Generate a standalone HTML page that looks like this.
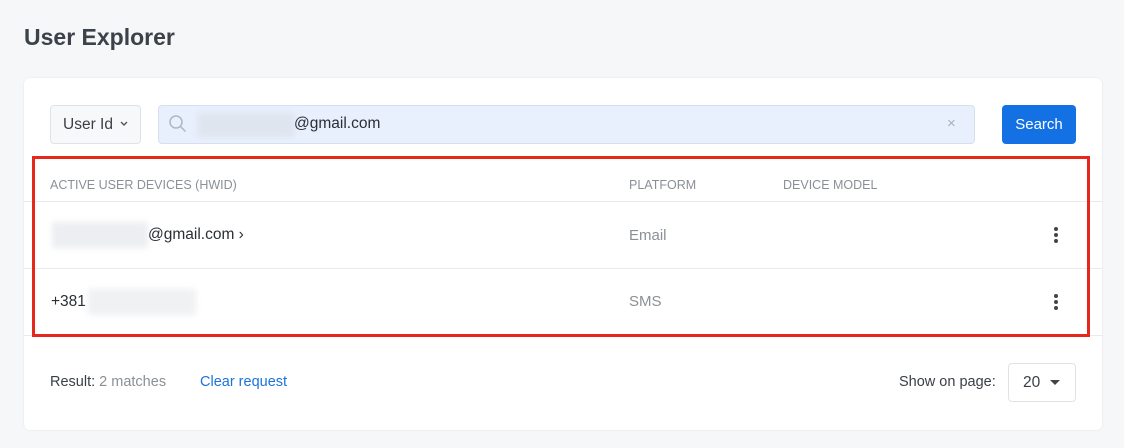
<!DOCTYPE html><html><head><style>
*{box-sizing:border-box;margin:0;padding:0}
body{width:1124px;height:448px;background:#f6f7f9;font-family:"Liberation Sans",sans-serif;position:relative;overflow:hidden;color:#333}
.a{position:absolute}
h1{position:absolute;left:24px;top:24px;font-size:23px;font-weight:bold;color:#3c4249}
.card{left:24px;top:78px;width:1078px;height:352px;background:#fff;border-radius:6px;box-shadow:0 0 2px rgba(0,0,0,.08)}
.blur{background:#eceef1;filter:blur(3px)}
.hd{font-size:12.5px;color:#8a9097;top:178px}
.line{left:24px;width:1078px;height:1px;background:#e8eaed}
.t{font-size:15.5px;color:#2a2f35}
.g{font-size:15px;color:#8b9096}
.dots{width:4px}
.dots i{display:block;width:4px;height:4px;border-radius:2px;background:#444;margin-bottom:2px}
</style></head><body>
<h1>User Explorer</h1>
<div class="a card"></div>
<div class="a" style="left:50px;top:105px;width:91px;height:39px;border:1px solid #dfe2e6;border-radius:4px;background:#f7f8fa"></div>
<div class="a t" style="left:63px;top:116px;color:#3a3f45">User Id</div>
<svg class="a" style="left:119px;top:120px" width="10" height="8"><path d="M2 2l3 3 3-3" stroke="#555" stroke-width="1.4" fill="none"/></svg>
<div class="a" style="left:158px;top:105px;width:817px;height:39px;border:1px solid #d6dff0;border-radius:4px;background:#e8effd"></div>
<svg class="a" style="left:168px;top:114px" width="20" height="20"><circle cx="8" cy="8" r="6" stroke="#aeb7c2" stroke-width="1.5" fill="none"/><path d="M12.5 12.5l5 5" stroke="#aeb7c2" stroke-width="1.5"/></svg>
<div class="a blur" style="left:198px;top:113px;width:96px;height:24px;background:#dfe5ef"></div>
<div class="a t" style="left:294px;top:115px">@gmail.com</div>
<div class="a" style="left:947px;top:115px;color:#a8b0ba;font-size:15px">×</div>
<div class="a" style="left:1002px;top:105px;width:74px;height:39px;background:#1371e3;border-radius:4px;color:#fff;font-size:15px;text-align:center;line-height:39px">Search</div>
<div class="a hd" style="left:50px">ACTIVE USER DEVICES (HWID)</div>
<div class="a hd" style="left:629px">PLATFORM</div>
<div class="a hd" style="left:783px">DEVICE MODEL</div>
<div class="a line" style="top:201px"></div>
<div class="a line" style="top:268px"></div>
<div class="a line" style="top:335px"></div>
<div class="a blur" style="left:52px;top:222px;width:96px;height:26px"></div>
<div class="a t" style="left:148px;top:226px">@gmail.com <b style="font-weight:normal">›</b></div>
<div class="a g" style="left:629px;top:227px">Email</div>
<div class="a dots" style="left:1054px;top:227px"><i></i><i></i><i></i></div>
<div class="a t" style="left:51px;top:293px">+381</div>
<div class="a blur" style="left:88px;top:289px;width:108px;height:26px;background:#f0f1f3"></div>
<div class="a g" style="left:629px;top:293px">SMS</div>
<div class="a dots" style="left:1054px;top:294px"><i></i><i></i><i></i></div>
<div class="a" style="left:32px;top:156px;width:1058px;height:181px;border:3px solid #e5281b"></div>
<div class="a" style="left:50px;top:374px;font-size:14.5px;color:#3a3f45">Result: <span style="color:#8b9096">2 matches</span></div>
<div class="a" style="left:200px;top:374px;font-size:14.5px;color:#1a73d9">Clear request</div>
<div class="a" style="left:899px;top:374px;font-size:14.5px;color:#3a3f45">Show on page:</div>
<div class="a" style="left:1008px;top:363px;width:68px;height:39px;border:1px solid #dfe2e6;border-radius:4px"></div>
<div class="a" style="left:1023px;top:374px;font-size:15.5px;color:#3a3f45">20</div>
<svg class="a" style="left:1049px;top:379px" width="12" height="7"><path d="M1 1h10l-5 5z" fill="#444"/></svg>
</body></html>
